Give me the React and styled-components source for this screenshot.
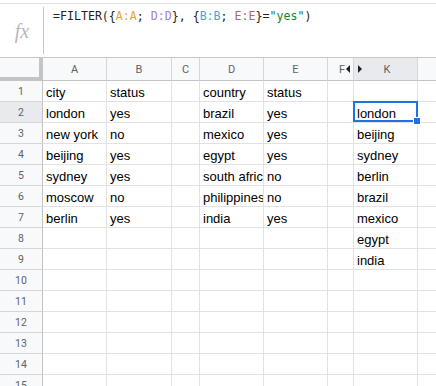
import React from "react";
import styled, { createGlobalStyle } from "styled-components";

const Global = createGlobalStyle`
  html, body { margin: 0; padding: 0; background: #fff; }
  body { width: 436px; height: 386px; overflow: hidden; font-family: "Liberation Sans", Arial, sans-serif; }
`;

const Page = styled.div`
  width: 436px;
  height: 386px;
  overflow: hidden;
  padding-top: 3px;
  box-sizing: border-box;
`;

const FormulaBar = styled.div`
  display: flex;
  height: 55px;
  border-top: 1px solid #e0e0e0;
  border-bottom: 1px solid #c7c7c7;
  box-sizing: border-box;
`;

const FxBox = styled.div`
  width: 43px;
  display: flex;
  align-items: center;
  justify-content: center;
  padding: 4px 0;
  box-sizing: border-box;
`;

const FxLabel = styled.span`
  font-family: "Liberation Serif", "DejaVu Serif", serif;
  font-style: italic;
  font-size: 20px;
  color: #b8b8b8;
  margin-top: 1px;
  margin-left: 1px;
`;

const Divider = styled.div`
  width: 1px;
  margin: 3px 0 3px;
  background: #c7c7c7;
`;

const Formula = styled.div`
  padding: 5px 0 0 9px;
  font-family: "DejaVu Sans Mono", "Liberation Mono", monospace;
  font-size: 11.6px;
  color: #222;
  white-space: pre;
`;

const Ref = styled.span`
  color: ${(p) => p.$c};
`;

const COLS = [43, 64, 65, 28, 64, 64, 26, 64, 20];

const Grid = styled.div`
  display: grid;
  grid-template-columns: ${COLS.map((c) => c + "px").join(" ")};
  grid-template-rows: 23px repeat(15, 21px);
`;

const Corner = styled.div`
  background: #f8f9fa;
  border-right: 4px solid #c4c4c4;
  border-bottom: 4px solid #c4c4c4;
  box-sizing: border-box;
`;

const ColHead = styled.div`
  background: ${(p) => (p.$active ? "#e8eaed" : "#f8f9fa")};
  border-right: 1px solid #d6d6d6;
  border-bottom: 1px solid #c4c4c4;
  box-sizing: border-box;
  display: flex;
  align-items: center;
  justify-content: ${(p) => p.$justify || "center"};
  gap: 1px;
  padding: ${(p) => p.$pad || "0"};
  font-size: 11px;
  color: #5f6368;
  font-family: "Roboto", "Liberation Sans", sans-serif;
`;

const Tri = styled.span`
  width: 0;
  height: 0;
  border-top: 4px solid transparent;
  border-bottom: 4px solid transparent;
  ${(p) =>
    p.$dir === "left"
      ? "border-right: 4px solid #202124;"
      : "border-left: 4px solid #202124;"}
`;

const KLabel = styled.span`
  flex: 1;
  text-align: center;
  padding-right: 6px;
`;

const RowHead = styled.div`
  background: ${(p) => (p.$active ? "#e8eaed" : "#f8f9fa")};
  border-right: 1px solid #c4c4c4;
  border-bottom: 1px solid #d6d6d6;
  box-sizing: border-box;
  display: flex;
  align-items: center;
  justify-content: center;
  font-size: 10.5px;
  color: #5f6368;
  font-family: "Roboto", "Liberation Sans", sans-serif;
`;

const Cell = styled.div`
  position: relative;
  z-index: ${(p) => (p.$selected ? 2 : "auto")};
  border-right: 1px solid #e2e2e2;
  border-bottom: 1px solid #e2e2e2;
  box-sizing: border-box;
  padding: 0 3px 1px;
  display: flex;
  align-items: flex-end;
  font-size: 13px;
  color: #000;
  white-space: nowrap;
  overflow: ${(p) => (p.$selected ? "visible" : "hidden")};
  font-family: "Liberation Sans", Arial, sans-serif;
`;

const Selection = styled.div`
  position: absolute;
  left: -1px;
  top: -1px;
  right: -1px;
  bottom: 0;
  border: 2px solid #1a73e8;
  pointer-events: none;
`;

const Handle = styled.div`
  position: absolute;
  right: -5px;
  bottom: -5px;
  width: 6px;
  height: 6px;
  background: #1a73e8;
  border: 1px solid #fff;
`;

const data = [
  ["city", "status", "", "country", "status", "", ""],
  ["london", "yes", "", "brazil", "yes", "", "london"],
  ["new york", "no", "", "mexico", "yes", "", "beijing"],
  ["beijing", "yes", "", "egypt", "yes", "", "sydney"],
  ["sydney", "yes", "", "south africa", "no", "", "berlin"],
  ["moscow", "no", "", "philippines", "no", "", "brazil"],
  ["berlin", "yes", "", "india", "yes", "", "mexico"],
  ["", "", "", "", "", "", "egypt"],
  ["", "", "", "", "", "", "india"],
];

export default function App() {
  const rows = [];
  for (let r = 0; r < 15; r++) {
    const vals = data[r] || [];
    rows.push(
      <React.Fragment key={r}>
        <RowHead $active={r === 1}>{r + 1}</RowHead>
        {Array.from({ length: 8 }).map((_, c) => {
          const sel = r === 1 && c === 6;
          return (
            <Cell key={c} $selected={sel}>
              {vals[c] || ""}
              {sel && (
                <Selection>
                  <Handle />
                </Selection>
              )}
            </Cell>
          );
        })}
      </React.Fragment>
    );
  }

  return (
    <>
      <Global />
      <Page>
        <FormulaBar>
          <FxBox>
            <FxLabel>fx</FxLabel>
          </FxBox>
          <Divider />
          <Formula>
            =FILTER({"{"}
            <Ref $c="#e6a23c">A:A</Ref>; <Ref $c="#a87fc1">D:D</Ref>
            {"}"}, {"{"}
            <Ref $c="#3fa9d9">B:B</Ref>; <Ref $c="#c0606b">E:E</Ref>
            {"}"}=<Ref $c="#188038">"yes"</Ref>)
          </Formula>
        </FormulaBar>
        <Grid>
          <Corner />
          <ColHead>A</ColHead>
          <ColHead>B</ColHead>
          <ColHead>C</ColHead>
          <ColHead>D</ColHead>
          <ColHead>E</ColHead>
          <ColHead $justify="flex-end" $pad="0 3px 0 0">
            F<Tri $dir="left" />
          </ColHead>
          <ColHead $active $justify="flex-start" $pad="0 0 0 4px">
            <Tri $dir="right" />
            <KLabel>K</KLabel>
          </ColHead>
          <ColHead />
          {rows}
        </Grid>
      </Page>
    </>
  );
}
